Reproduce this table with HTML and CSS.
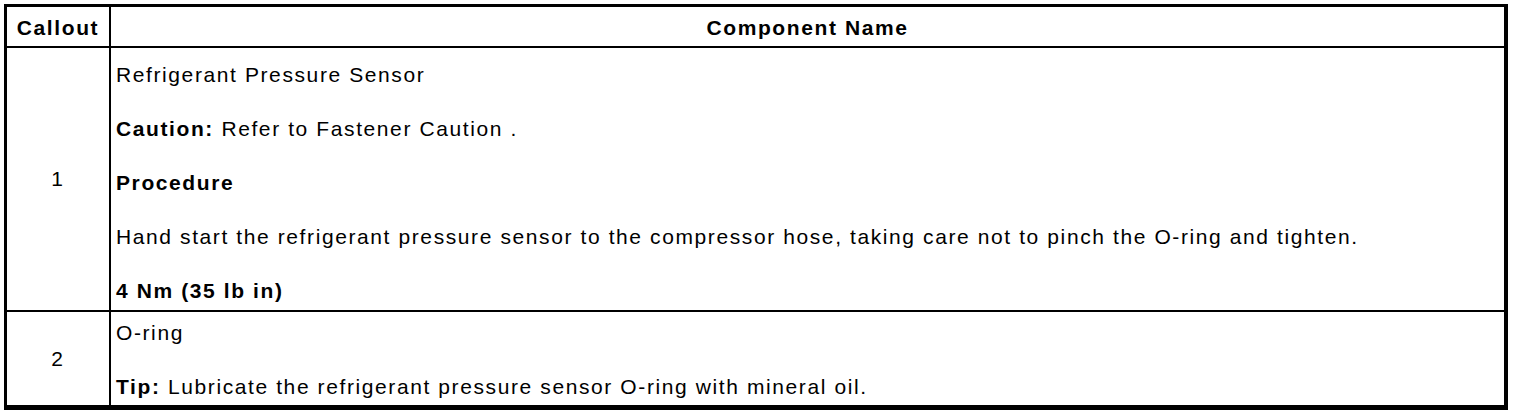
FILE: index.html
```html
<!DOCTYPE html>
<html>
<head>
<meta charset="utf-8">
<link rel="stylesheet" href="styles.css">
</head>
<body>
<table class="parts">
  <colgroup>
    <col class="col-callout">
    <col class="col-name">
  </colgroup>
  <thead>
    <tr class="head-row">
      <th class="cell-callout">Callout</th>
      <th class="cell-name">Component Name</th>
    </tr>
  </thead>
  <tbody>
    <tr class="row row-first">
      <td class="cell-callout">1</td>
      <td class="cell-name">
        <p>Refrigerant Pressure Sensor</p>
        <p><b>Caution:</b> Refer to Fastener Caution .</p>
        <p><b>Procedure</b></p>
        <p>Hand start the refrigerant pressure sensor to the compressor hose, taking care not to pinch the O-ring and tighten.</p>
        <p><b>4 Nm (35 lb in)</b></p>
      </td>
    </tr>
    <tr class="row row-last">
      <td class="cell-callout">2</td>
      <td class="cell-name">
        <p>O-ring</p>
        <p><b>Tip:</b> Lubricate the refrigerant pressure sensor O-ring with mineral oil.</p>
      </td>
    </tr>
  </tbody>
</table>
</body>
</html>
```

FILE: styles.css
```css
html, body {
  margin: 0;
  padding: 0;
  background: #ffffff;
}

body {
  font-family: "Liberation Sans", Arial, sans-serif;
  font-size: 21px;
  letter-spacing: 1.6px;
  color: #000;
}

.parts {
  margin: 4px;
  width: 1504px;
  table-layout: fixed;
  border-collapse: separate;
  border-spacing: 0;
  border-style: solid;
  border-color: #000;
  border-width: 3px 4px 5px 3px;
}

.col-callout { width: 104px; }

.parts th, .parts td {
  padding: 0;
  vertical-align: middle;
  box-sizing: border-box;
}

.cell-callout {
  border-right: 2px solid #000;
  text-align: center;
}

.head-row th {
  height: 41px;
  border-bottom: 2px solid #000;
  font-weight: bold;
  text-align: center;
  line-height: 22px;
  padding-top: 2px;
}

.cell-name {
  text-align: left;
}

.parts td.cell-name {
  padding-left: 5px;
}

.row-first td {
  border-bottom: 2px solid #000;
  height: 264px;
}

.row-last td {
  height: 93px;
}

.row-first td.cell-name {
  padding-top: 16px;
  padding-bottom: 8px;
}

.row-last td.cell-name {
  padding-top: 10px;
  padding-bottom: 7px;
}

.cell-name p {
  margin: 0 0 32px 0;
  line-height: 22px;
}

.cell-name p:last-child {
  margin-bottom: 0;
}
```
